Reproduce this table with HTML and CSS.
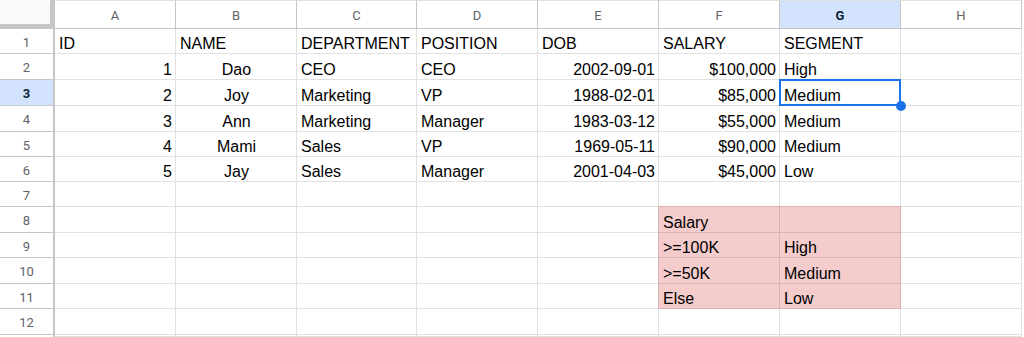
FILE: index.html
```html
<!DOCTYPE html>
<html>
<head>
<meta charset="utf-8">
<title>Sheet</title>
<link rel="stylesheet" href="styles.css">
</head>
<body>
<div class="sheet">
  <div class="corner"></div>
  <div class="ch">A</div><div class="ch">B</div><div class="ch">C</div><div class="ch">D</div><div class="ch">E</div><div class="ch">F</div><div class="ch ch-sel">G</div><div class="ch">H</div>

  <div class="rh">1</div>
  <div class="c">ID</div><div class="c">NAME</div><div class="c">DEPARTMENT</div><div class="c">POSITION</div><div class="c">DOB</div><div class="c">SALARY</div><div class="c">SEGMENT</div><div class="c"></div>

  <div class="rh">2</div>
  <div class="c r">1</div><div class="c m">Dao</div><div class="c">CEO</div><div class="c">CEO</div><div class="c r">2002-09-01</div><div class="c r">$100,000</div><div class="c">High</div><div class="c"></div>

  <div class="rh rh-sel">3</div>
  <div class="c r">2</div><div class="c m">Joy</div><div class="c">Marketing</div><div class="c">VP</div><div class="c r">1988-02-01</div><div class="c r">$85,000</div><div class="c sel">Medium<span class="sel-box"></span><span class="sel-handle"></span></div><div class="c"></div>

  <div class="rh">4</div>
  <div class="c r">3</div><div class="c m">Ann</div><div class="c">Marketing</div><div class="c">Manager</div><div class="c r">1983-03-12</div><div class="c r">$55,000</div><div class="c">Medium</div><div class="c"></div>

  <div class="rh">5</div>
  <div class="c r">4</div><div class="c m">Mami</div><div class="c">Sales</div><div class="c">VP</div><div class="c r">1969-05-11</div><div class="c r">$90,000</div><div class="c">Medium</div><div class="c"></div>

  <div class="rh">6</div>
  <div class="c r">5</div><div class="c m">Jay</div><div class="c">Sales</div><div class="c">Manager</div><div class="c r">2001-04-03</div><div class="c r">$45,000</div><div class="c">Low</div><div class="c"></div>

  <div class="rh">7</div>
  <div class="c"></div><div class="c"></div><div class="c"></div><div class="c"></div><div class="c"></div><div class="c"></div><div class="c"></div><div class="c"></div>

  <div class="rh">8</div>
  <div class="c"></div><div class="c"></div><div class="c"></div><div class="c"></div><div class="c"></div><div class="c pk pk-l pk-t">Salary</div><div class="c pk pk-t"></div><div class="c"></div>

  <div class="rh">9</div>
  <div class="c"></div><div class="c"></div><div class="c"></div><div class="c"></div><div class="c"></div><div class="c pk pk-l">&gt;=100K</div><div class="c pk">High</div><div class="c"></div>

  <div class="rh">10</div>
  <div class="c"></div><div class="c"></div><div class="c"></div><div class="c"></div><div class="c"></div><div class="c pk pk-l">&gt;=50K</div><div class="c pk">Medium</div><div class="c"></div>

  <div class="rh">11</div>
  <div class="c"></div><div class="c"></div><div class="c"></div><div class="c"></div><div class="c"></div><div class="c pk pk-l">Else</div><div class="c pk">Low</div><div class="c"></div>

  <div class="rh">12</div>
  <div class="c"></div><div class="c"></div><div class="c"></div><div class="c"></div><div class="c"></div><div class="c"></div><div class="c"></div><div class="c"></div>

  <div class="rh rh-edge"></div>
  <div class="c"></div><div class="c"></div><div class="c"></div><div class="c"></div><div class="c"></div><div class="c"></div><div class="c"></div><div class="c"></div>
</div>
</body>
</html>
```

FILE: styles.css
```css
html, body {
  margin: 0;
  padding: 0;
  background: #ffffff;
  overflow: hidden;
  height: 337px;
}

.sheet {
  display: grid;
  width: 1022px;
  grid-template-columns: 55px 121px 121px 120px 121px 121px 121px 121px 121px;
  grid-template-rows: 29px 25px 26px 26px 26px 25px 25px 25px 26px 25px 26px 25px 26px 2px;
  font-family: "Liberation Sans", Arial, sans-serif;
  font-size: 16px;
  color: #000000;
}

.corner {
  background: #f8f9fa;
  border-right: 5px solid #c4c7c5;
  border-bottom: 5px solid #c4c7c5;
}

.ch {
  display: flex;
  align-items: center;
  justify-content: center;
  border-top: 1px solid #e1e1e1;
  border-right: 1px solid #c4c7c5;
  border-bottom: 1px solid #c4c7c5;
  font-family: Roboto, "Liberation Sans", sans-serif;
  font-size: 13px;
  color: #5f6368;
  padding-top: 2px;
}

.ch-sel {
  background: #d3e3fd;
  color: #0b1f3a;
  font-weight: 700;
}

.rh {
  display: flex;
  align-items: center;
  justify-content: center;
  border-right: 2px solid #c4c7c5;
  border-bottom: 1px solid #c4c7c5;
  font-family: Roboto, "Liberation Sans", sans-serif;
  font-size: 13px;
  color: #5f6368;
  padding-top: 2px;
}

.rh-edge {
  padding-top: 0;
  border-bottom: none;
}

.rh-sel {
  background: #d3e3fd;
  color: #0b1f3a;
  font-weight: 700;
}

.c {
  position: relative;
  display: flex;
  align-items: flex-end;
  justify-content: flex-start;
  border-right: 1px solid #e1e1e1;
  border-bottom: 1px solid #e1e1e1;
  padding: 0 3px 0 4px;
  line-height: 18px;
  white-space: nowrap;
}

.r {
  justify-content: flex-end;
}

.m {
  justify-content: center;
}

.pk {
  background: #f4cccc;
  border-right-color: #dcb3b3;
  border-bottom-color: #dcb3b3;
}

.pk-l {
  box-shadow: -1px 0 0 #dcb3b3;
}

.pk-t {
  box-shadow: 0 -1px 0 #dcb3b3;
}

.pk-l.pk-t {
  box-shadow: -1px 0 0 #dcb3b3, 0 -1px 0 #dcb3b3, -1px -1px 0 #dcb3b3;
}

.sel {
  z-index: 2;
}

.sel-box {
  position: absolute;
  left: -1px;
  top: -1px;
  right: -1px;
  bottom: -1px;
  border: 2px solid #1a73e8;
}

.sel-handle {
  position: absolute;
  right: -6px;
  bottom: -6px;
  width: 10px;
  height: 10px;
  border-radius: 50%;
  background: #1a73e8;
}
```
